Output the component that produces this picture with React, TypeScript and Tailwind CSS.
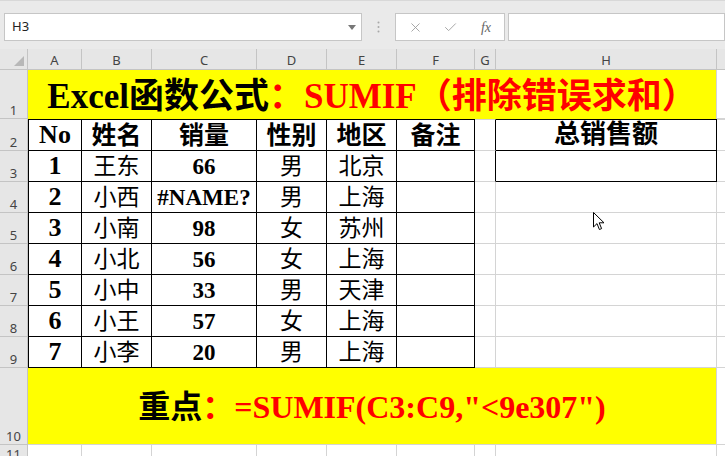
import React from 'react';
import { X, Check } from 'lucide-react';

const serif = "font-['Liberation_Serif','Noto_Sans_CJK_SC',serif]";

const rows: [number, string, string, string, string][] = [
  [1, '王东', '66', '男', '北京'],
  [2, '小西', '#NAME?', '男', '上海'],
  [3, '小南', '98', '女', '苏州'],
  [4, '小北', '56', '女', '上海'],
  [5, '小中', '33', '男', '天津'],
  [6, '小王', '57', '女', '上海'],
  [7, '小李', '20', '男', '上海'],
];

const letters = ['A', 'B', 'C', 'D', 'E', 'F', 'G', 'H'];

const RowHead: React.FC<{ n: string; top?: boolean }> = ({ n, top }) => (
  <div
    className={`flex justify-center overflow-hidden border-r border-b border-[#c4c4c4] bg-[#e6e6e6] font-['Noto_Sans',sans-serif] text-[13px] leading-none text-[#444] ${
      top ? 'items-start pt-[3px]' : 'items-end pb-[1px]'
    }`}
  >
    {n}
  </div>
);

// black bordered table cell
const T: React.FC<{ children?: React.ReactNode; className?: string }> = ({ children, className = '' }) => (
  <div
    className={`flex items-center justify-center overflow-hidden whitespace-nowrap border-r border-b border-black leading-none text-black ${serif} ${className}`}
  >
    {children}
  </div>
);

// plain gridline cell
const G: React.FC<{ className?: string }> = ({ className = '' }) => (
  <div className={`border-b border-[#d4d4d4] ${className}`} />
);

const Toolbar: React.FC = () => (
  <div className="flex h-[49px] items-start border-t border-[#d8d8d8] bg-[#eaeaea] pt-[12px] font-['Noto_Sans',sans-serif]">
    <div className="ml-[4px] flex h-[28px] w-[358px] items-center justify-between border border-[#c6c6c6] bg-white pl-[7px] pr-[5px] text-[13px] text-[#222]">
      <span>H3</span>
      <svg width="8" height="5" viewBox="0 0 8 5">
        <path d="M0 0 L8 0 L4 5 Z" fill="#777" />
      </svg>
    </div>
    <div className="flex h-[28px] w-[33px] items-center justify-center">
      <svg width="3" height="12" viewBox="0 0 3 12">
        <circle cx="1.5" cy="1.5" r="1" fill="#a8a8a8" />
        <circle cx="1.5" cy="6" r="1" fill="#a8a8a8" />
        <circle cx="1.5" cy="10.5" r="1" fill="#a8a8a8" />
      </svg>
    </div>
    <div className="flex h-[28px] w-[110px] items-center border border-[#c6c6c6] bg-white">
      <div className="flex w-[36px] justify-center pl-[2px]">
        <X size={15} strokeWidth={1.4} color="#9c9c9c" />
      </div>
      <div className="flex w-[36px] justify-center">
        <Check size={15} strokeWidth={1.6} color="#a8a8a8" />
      </div>
      <div className="flex w-[36px] justify-center font-['Liberation_Serif',serif] text-[14px] italic text-[#666]">
        fx
      </div>
    </div>
    <div className="ml-[3px] h-[28px] flex-1 border border-[#c6c6c6] bg-white" />
  </div>
);

export default function App() {
  return (
    <div className="relative h-[456px] w-[725px] overflow-hidden bg-white">
      <Toolbar />
      <div className="grid grid-cols-[28px_54px_70px_105px_70px_70px_78px_21px_221px_1fr] grid-rows-[21px_49px_32px_31px_31px_31px_31px_31px_31px_31px_77px_1fr]">
        {/* column headers */}
        <div className="relative border-r border-b border-[#c4c4c4] bg-[#e6e6e6]">
          <svg className="absolute right-[3px] bottom-[3px]" width="10" height="10" viewBox="0 0 10 10">
            <path d="M10 0 L10 10 L0 10 Z" fill="#b8b8b8" />
          </svg>
        </div>
        {letters.map((l) => (
          <div
            key={l}
            className="flex items-end justify-center border-r border-b border-[#c4c4c4] bg-[#e6e6e6] pb-[2px] font-['Noto_Sans',sans-serif] text-[13px] leading-none text-[#444]"
          >
            {l}
          </div>
        ))}
        <div className="border-b border-[#c4c4c4] bg-[#e6e6e6]" />

        {/* row 1 */}
        <RowHead n="1" />
        <div className={`col-span-8 flex items-center justify-center border-r border-[#d4d4d4] bg-[#ffff00] pt-[3px] text-[35px] font-bold leading-none whitespace-nowrap ${serif}`}>
          <span className="text-black">Excel函数公式</span>
          <span className="text-[#ff0000]">：SUMIF（排除错误求和）</span>
        </div>
        <G />

        {/* row 2 */}
        <RowHead n="2" />
        <T className="border-t border-l text-[26px] font-bold">No</T>
        <T className="border-t text-[25px] font-bold">姓名</T>
        <T className="border-t text-[25px] font-bold">销量</T>
        <T className="border-t text-[25px] font-bold">性别</T>
        <T className="border-t text-[25px] font-bold">地区</T>
        <T className="border-t text-[25px] font-bold">备注</T>
        <div className="border-t border-r border-b border-t-[#d4d4d4] border-r-black border-b-[#d4d4d4]" />
        <T className="border-t text-[26px] font-bold">总销售额</T>
        <div className="border-t border-b border-[#d4d4d4]" />

        {/* rows 3-9 */}
        {rows.map(([no, name, qty, sex, area], i) => (
          <React.Fragment key={no}>
            <RowHead n={String(i + 3)} />
            <T className="border-l text-[26px] font-bold">{no}</T>
            <T className="text-[23px]">{name}</T>
            <T className="text-[23px] font-bold">{qty}</T>
            <T className="text-[23px]">{sex}</T>
            <T className="text-[23px]">{area}</T>
            <T />
            {i === 0 ? (
              <div className="border-r border-b border-r-black border-b-[#d4d4d4]" />
            ) : (
              <div className="border-r border-b border-[#d4d4d4]" />
            )}
            {i === 0 ? <T /> : <div className="border-r border-b border-[#d4d4d4]" />}
            <G />
          </React.Fragment>
        ))}

        {/* row 10 */}
        <RowHead n="10" />
        <div className={`col-span-8 flex items-center justify-center border-r border-b border-[#d4d4d4] bg-[#ffff00] pt-[1px] text-[32px] font-bold leading-none whitespace-nowrap ${serif}`}>
          <span className="text-black">重点</span>
          <span className="text-[#ff0000]">：=SUMIF(C3:C9,"&lt;9e307")</span>
        </div>
        <G />

        {/* row 11 */}
        <RowHead n="11" top />
        {letters.map((l) => (
          <div key={l} className="border-r border-[#d4d4d4]" />
        ))}
        <div />
      </div>

      {/* mouse pointer */}
      <svg className="absolute left-[593px] top-[212px]" width="12" height="19" viewBox="0 0 12 19">
        <path
          d="M0.5 0.5 L0.5 15 L4 11.6 L6.4 17.5 L8.6 16.6 L6.2 10.8 L11 10.8 Z"
          fill="white"
          stroke="black"
          strokeWidth="1"
          strokeLinejoin="round"
        />
      </svg>
    </div>
  );
}
